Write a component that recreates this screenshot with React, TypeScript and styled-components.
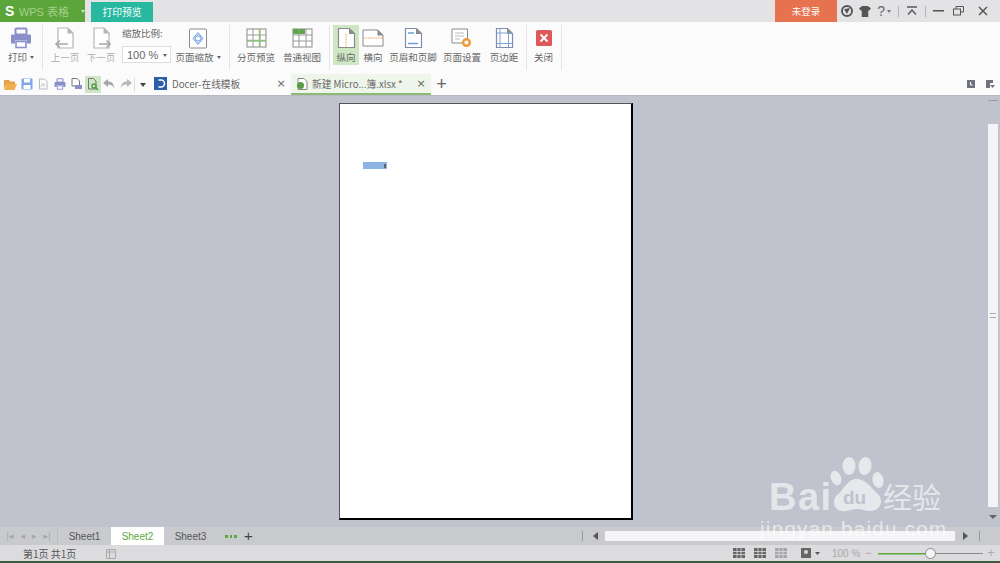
import React from "react";
import styled, { createGlobalStyle } from "styled-components";

const GlobalStyle = createGlobalStyle`
  html, body { margin: 0; padding: 0; background: #e3e3e5; overflow: hidden; }
  * { box-sizing: border-box; }
`;

const Font = `"Noto Sans CJK SC", "Liberation Sans", sans-serif`;

const Blue = "#8b8fc9";

/* ---------- icons ---------- */
const Sheet = ({ stroke = "#9a9a9a", children }: { stroke?: string; children?: React.ReactNode }) => (
  <svg width="24" height="22" viewBox="0 0 24 22" fill="none">
    <path d="M4.500 1.500h11l5 5v14h-16z" fill="#fff" stroke={stroke} strokeWidth="1.200" />
    <path d="M15 1.500v5.500h5.500z" fill="#8a8a8a" />
    {children}
  </svg>
);

const PrintIcon = ({ size = 22, color = Blue }: { size?: number; color?: string }) => (
  <svg width={size} height={size} viewBox="0 0 22 22">
    <rect x="5.500" y="1.500" width="11" height="6" fill="none" stroke={color} strokeWidth="2" rx="1" />
    <path d="M1 8.500a1 1 0 0 1 1-1h18a1 1 0 0 1 1 1v8h-4v-3H5v3H1z" fill={color} />
    <rect x="6" y="14.500" width="10" height="6" fill="#fff" stroke={color} strokeWidth="1.600" />
  </svg>
);

const PageArrow = ({ right }: { right?: boolean }) => (
  <svg width="24" height="22" viewBox="0 0 24 22" fill="none">
    <path d="M5 1h10l5 5v15H5z" fill="#fff" stroke="#b5b5b5" strokeWidth="1.200" />
    <path d="M14.500 1v5.500H20z" fill="#b5b5b5" />
    {right ? (
      <path d="M10 17h11M17.500 13.500l3.500 3.500-3.500 3.500" stroke="#a8a8a8" strokeWidth="1.600" />
    ) : (
      <path d="M15 17H3M7 13.500L3 17l4 3.500" stroke="#a8a8a8" strokeWidth="1.600" />
    )}
  </svg>
);

const FitIcon = () => (
  <svg width="20" height="21" viewBox="0 0 20 21" fill="none">
    <rect x="1.500" y="1" width="17" height="19" rx="1" fill="#fff" stroke="#8a8a8a" />
    <path d="M10 4.500l5 6-5 6-5-6z" fill="#cfe0f7" stroke="#6f9fe0" />
    <circle cx="10" cy="10.500" r="2.600" fill="#fff" stroke="#6f9fe0" />
  </svg>
);

const GridIcon = ({ corner }: { corner?: boolean }) => (
  <svg width="21" height="20" viewBox="0 0 21 20" fill="none">
    <rect x="1" y="1" width="19" height="18" fill="#fff" stroke="#8a8a8a" />
    {corner && <rect x="1" y="1" width="12" height="5" fill="#5da84a" />}
    <path d="M1 7h19M1 13h19M7 1v18M14 1v18" stroke="#9a9a9a" />
    {!corner && <path d="M1 12.500h19M13.500 1v18" stroke="#8cc377" strokeWidth="1.400" />}
  </svg>
);

const CloseSquare = () => (
  <svg width="16" height="16" viewBox="0 0 16 16">
    <rect width="16" height="16" rx="1.500" fill="#dd5a5c" />
    <path d="M4.500 4.500l7 7M11.500 4.500l-7 7" stroke="#fff" strokeWidth="2" />
  </svg>
);

const Paw = () => (
  <svg width="56" height="64" viewBox="0 0 56 64" fill="rgba(255,255,255,.62)">
    <ellipse cx="19" cy="10" rx="6.500" ry="9" />
    <ellipse cx="35" cy="10" rx="6.500" ry="9" transform="rotate(8 35 10)" />
    <ellipse cx="6" cy="22" rx="5" ry="7.500" transform="rotate(-20 6 22)" />
    <ellipse cx="48" cy="24" rx="5.500" ry="8" transform="rotate(-12 48 24)" />
    <path d="M27 23c9 0 14 9 21 15 6 6 3 17-8 17-5 0-8-2-13-2s-9 3-15 2C3 54 2 44 7 39c7-5 10-16 20-16z" />
  </svg>
);

/* ---------- layout ---------- */
const Root = styled.div`
  position: relative;
  width: 1000px;
  height: 563px;
  display: flex;
  flex-direction: column;
  overflow: hidden;
  font-family: ${Font};
  background: #e3e3e5;
`;

const TitleBar = styled.div`
  height: 22px;
  display: flex;
  align-items: stretch;
  background: #e3e3e5;
`;

const AppButton = styled.div`
  width: 85px;
  background: #5ba53a;
  display: flex;
  align-items: center;
  padding-left: 5px;
  color: #a5d08d;
  font-size: 11px;
  gap: 4px;
  white-space: nowrap;
  font-family: "Liberation Sans", "Noto Sans CJK SC", sans-serif;
`;

const AppMark = styled.span`
  color: #fff;
  font-weight: 700;
  font-size: 14px;
  width: 11px;
`;

const AppCaret = styled.span`
  margin-left: 8px;
  width: 0;
  height: 0;
  border: 2.500px solid transparent;
  border-top: 3px solid #cfe5c0;
  margin-top: 3px;
`;

const PreviewTab = styled.div`
  margin: 2px 0 0 6px;
  width: 62px;
  background: #27b89f;
  color: #fff;
  font-size: 9.800px;
  display: flex;
  align-items: center;
  justify-content: center;
`;

const Spring = styled.div`
  flex: 1;
`;

const Login = styled.div`
  width: 62px;
  background: #e6724f;
  color: #fff;
  font-size: 9.500px;
  display: flex;
  align-items: center;
  justify-content: center;
`;

const WinTools = styled.div`
  width: 163px;
  display: flex;
  align-items: center;
`;

const WinBtn = styled.div<{ $w: number; $pr?: number }>`
  width: ${(p) => p.$w}px;
  padding-right: ${(p) => p.$pr ?? 0}px;
  display: flex;
  align-items: center;
  justify-content: center;
  gap: 2px;
  color: #666;
  font-family: "Liberation Sans", sans-serif;
  font-size: 14px;
`;

const WinSep = styled.div`
  width: 1px;
  height: 11px;
  background: #b4b4b8;
`;

const Ribbon = styled.div`
  height: 51px;
  background: #fbfbfb;
  display: flex;
  align-items: flex-start;
  padding: 3px 0 0 0;
`;

const RibbonSep = styled.div<{ $gap?: number }>`
  width: 1px;
  height: 45px;
  background: #e6e6e6;
  margin-right: ${(p) => p.$gap ?? 0}px;
`;

const Tool = styled.div<{ $w: number; $after?: number; $active?: boolean; $muted?: boolean }>`
  width: ${(p) => p.$w}px;
  margin-right: ${(p) => p.$after ?? 0}px;
  height: 40px;
  display: flex;
  flex-direction: column;
  align-items: center;
  padding-top: 2px;
  flex-shrink: 0;
  background: ${(p) => (p.$active ? "#cfe6c5" : "transparent")};
  color: ${(p) => (p.$muted ? "#aeaeae" : "#666")};
  font-size: 9.500px;
  white-space: nowrap;
`;

const ToolIcon = styled.div`
  height: 22px;
  display: flex;
  align-items: center;
  justify-content: center;
`;

const ToolLabel = styled.div`
  margin-top: 2px;
  line-height: 12px;
  display: flex;
  align-items: center;
  gap: 3px;
`;

const Caret = styled.span<{ $color?: string; $big?: boolean }>`
  display: inline-block;
  width: 0;
  height: 0;
  border: ${(p) => (p.$big ? 3 : 2)}px solid transparent;
  border-top: ${(p) => (p.$big ? 4 : 3)}px solid ${(p) => p.$color ?? "#666"};
  border-bottom-width: 0;
  margin-top: 1px;
`;

const ZoomGroup = styled.div`
  width: 49px;
  margin-left: 3px;
  color: #666;
  font-size: 9.500px;
`;

const ZoomTitle = styled.div`
  line-height: 12px;
  margin-top: 2px;
  white-space: nowrap;
`;

const ZoomSelect = styled.div`
  margin-top: 7px;
  height: 17px;
  border: 1px solid #dedede;
  background: #fff;
  display: flex;
  align-items: center;
  justify-content: space-between;
  padding: 0 3px 0 4px;
  font-family: "Liberation Sans", sans-serif;
  font-size: 11px;
`;

const TabBar = styled.div`
  height: 22px;
  background: #fbfbfb;
  display: flex;
  align-items: center;
  padding-left: 2px;
`;

const Quick = styled.div<{ $on?: boolean }>`
  width: 16.500px;
  height: 17px;
  display: flex;
  align-items: center;
  justify-content: center;
  background: ${(p) => (p.$on ? "#cfe6c5" : "transparent")};
`;

const QuickSep = styled.div`
  width: 1px;
  height: 15px;
  background: #ddd;
  margin-right: 5px;
`;

const DocTab = styled.div<{ $on?: boolean; $w: number; $before?: number }>`
  width: ${(p) => p.$w}px;
  height: 21px;
  margin-left: ${(p) => p.$before ?? 0}px;
  margin-top: 1px;
  display: flex;
  align-items: center;
  padding: 0 5px;
  font-size: 9.700px;
  color: #666;
  background: ${(p) => (p.$on ? "#eef5ea" : "transparent")};
  border-bottom: 2px solid ${(p) => (p.$on ? "#8dbb74" : "transparent")};
`;

const DocName = styled.span<{ $gap: number }>`
  flex: 1;
  margin-left: ${(p) => p.$gap}px;
  white-space: nowrap;
`;

const TabClose = styled.span`
  color: #666;
  font-family: "DejaVu Sans", sans-serif;
  font-size: 11px;
  width: 10px;
  text-align: center;
`;

const PlusBtn = styled.span`
  color: #666;
  font-family: "Liberation Sans", sans-serif;
  font-size: 18px;
  line-height: 18px;
  margin-left: 5px;
  width: 11px;
  text-align: center;
`;

const TabTools = styled.div`
  margin-left: auto;
  display: flex;
  gap: 11px;
  padding-right: 5px;
`;

const Workspace = styled.div`
  flex: 1;
  min-height: 0;
  background: #c0c3cd;
  display: flex;
  border-top: 1px solid #b7bac4;
`;

const Canvas = styled.div`
  flex: 1;
  padding: 7px 0 0 339px;
`;

const Paper = styled.div`
  width: 294px;
  height: 417px;
  background: #fff;
  border: 1px solid #555;
  border-right: 2px solid #000;
  border-bottom: 2px solid #000;
  padding: 58px 0 0 23px;
`;

const Cell = styled.div`
  width: 24px;
  height: 7px;
  background: #8db4e2;
  display: flex;
  justify-content: flex-end;
  align-items: center;
  padding-right: 1px;
`;

const CellMark = styled.span`
  width: 2px;
  height: 4px;
  background: #5a6672;
`;

const VScroll = styled.div`
  width: 12px;
  display: flex;
  flex-direction: column;
  align-items: center;
  padding-right: 2px;
`;

const VCap = styled.div`
  height: 28px;
  display: flex;
  align-items: flex-start;
  justify-content: center;
  padding-top: 4px;
`;

const VThumb = styled.div`
  width: 10px;
  height: 383px;
  background: #f4f4f6;
  display: flex;
  align-items: center;
  justify-content: center;
`;

const VGrip = styled.div`
  width: 6px;
  height: 5px;
  border-top: 1px solid #aaa;
  border-bottom: 1px solid #aaa;
`;

const VDown = styled.div`
  margin-top: 8px;
  width: 0;
  height: 0;
  border: 4px solid transparent;
  border-top: 4px solid #666;
`;

const SheetBar = styled.div`
  height: 18px;
  background: #c9cacd;
  display: flex;
  align-items: stretch;
  font-size: 10px;
`;

const SheetNav = styled.div`
  width: 58px;
  display: flex;
  align-items: center;
  justify-content: space-between;
  padding: 0 6px;
  color: #a6a6a8;
  font-size: 9px;
  font-family: "DejaVu Sans", sans-serif;
  border-right: 1px solid #bdbdc0;
`;

const SheetTab = styled.div<{ $on?: boolean }>`
  width: 53px;
  display: flex;
  align-items: center;
  justify-content: center;
  background: ${(p) => (p.$on ? "#fff" : "transparent")};
  color: ${(p) => (p.$on ? "#5da83e" : "#555")};
  font-family: "Liberation Sans", sans-serif;
`;

const SheetMore = styled.div`
  margin-left: 8px;
  width: 12px;
  display: flex;
  align-items: center;
  gap: 2px;
`;

const Dot = styled.span`
  width: 3px;
  height: 3px;
  background: #5da83e;
`;

const SheetPlus = styled.span`
  margin-left: 6px;
  width: 11px;
  color: #444;
  font-family: "Liberation Sans", sans-serif;
  font-size: 15px;
  line-height: 18px;
  text-align: center;
`;

const HScroll = styled.div`
  margin-left: auto;
  width: 418px;
  display: flex;
  align-items: center;
  padding: 0 20px 0 0;
`;

const HDivider = styled.div`
  width: 1px;
  height: 10px;
  background: #9a9a9c;
`;

const VCapLine = styled.div`
  width: 10px;
  height: 1px;
  background: #9a9a9c;
`;

const Tri = styled.div<{ $right?: boolean }>`
  width: 0;
  height: 0;
  border-top: 4px solid transparent;
  border-bottom: 4px solid transparent;
  ${(p) => (p.$right ? "border-left: 5px solid #555;" : "border-right: 5px solid #555;")}
  margin: ${(p) => (p.$right ? "0 11px 0 8px" : "0 7px 0 10px")};
`;

const HThumb = styled.div`
  flex: 1;
  height: 10px;
  background: #f4f4f6;
`;

const StatusBar = styled.div`
  height: 16px;
  background: #dcdcde;
  display: flex;
  align-items: center;
  padding: 0 4px 0 23px;
  font-size: 10px;
  color: #555;
`;

const StatusIcon = styled.div`
  margin-left: 29px;
  display: flex;
`;

const ViewBtns = styled.div`
  margin-left: auto;
  display: flex;
  align-items: center;
  gap: 9px;
  margin-right: 7px;
`;

const ViewLast = styled.div`
  margin-left: 5px;
  display: flex;
`;

const ZoomText = styled.span`
  color: #a8a8aa;
  font-family: "Liberation Sans", sans-serif;
  font-size: 10px;
  width: 31px;
`;

const SliderSign = styled.span<{ $before?: number }>`
  margin-left: ${(p) => p.$before ?? 0}px;
  color: #a8a8aa;
  font-family: "Liberation Sans", sans-serif;
  font-size: 12px;
  width: 10px;
  text-align: center;
`;

const Slider = styled.div`
  position: relative;
  margin-left: 5px;
  width: 105px;
  height: 1px;
  background: #8a8a8a;
`;

const SliderFill = styled.div`
  height: 1px;
  background: #5da83e;
  box-shadow: 0 0.500px 0 #5da83e;
  width: 48px;
`;

const Knob = styled.div`
  position: absolute;
  left: 47px;
  top: -5px;
  width: 11px;
  height: 11px;
  border-radius: 50%;
  background: #f5f5f5;
  border: 1px solid #8a8a8a;
`;

const BottomEdge = styled.div`
  height: 2px;
  background: #3e5b3c;
`;

/* watermark lies over the app */
const Watermark = styled.div`
  position: absolute;
  left: 760px;
  top: 456px;
  width: 200px;
  color: rgba(255, 255, 255, 0.62);
  pointer-events: none;
`;

const MarkRow = styled.div`
  display: flex;
  align-items: flex-start;
  padding-left: 9px;
  height: 62px;
`;

const BaiText = styled.span`
  width: 61px;
  margin-top: 20px;
  font-family: "Liberation Sans", sans-serif;
  font-weight: 700;
  font-size: 38px;
  line-height: 42px;
  letter-spacing: 1.500px;
`;

const PawSlot = styled.span`
  position: relative;
  display: flex;
`;

const DuText = styled.span`
  position: absolute;
  left: 13px;
  top: 33px;
  font-family: "Liberation Sans", sans-serif;
  font-weight: 700;
  font-size: 19px;
  line-height: 18px;
  color: #c0c3cd;
`;

const JingYan = styled.span`
  font-size: 29px;
  line-height: 30px;
  margin-left: -3px;
  margin-top: 25px;
  white-space: nowrap;
`;

const SiteText = styled.div`
  margin-top: 0;
  font-family: "Liberation Sans", sans-serif;
  font-size: 20.500px;
  letter-spacing: 1.300px;
  line-height: 22px;
  white-space: nowrap;
`;

/* ---------- small bits ---------- */
const smallIcons = [
  <svg width="13" height="11" viewBox="0 0 13 11"><path d="M0 1h5l1 1.500h5V5H3L0 10z" fill="#e6a04a" /><path d="M3 5h10l-2.500 6H0z" fill="#f0b050" /></svg>,
  <svg width="12" height="12" viewBox="0 0 12 12"><rect x=".5" y=".5" width="11" height="11" rx="1" fill="#7fa8e8" /><rect x="3" y="1" width="6" height="3.500" fill="#fff" /><rect x="2.500" y="7" width="7" height="4" fill="#fff" /></svg>,
  <svg width="12" height="12" viewBox="0 0 12 12" fill="none"><path d="M2.500 1h5l2.500 2.500V11h-7.500z" stroke="#bbb" /><path d="M4 8.500l2-3 2 3" stroke="#bbb" /></svg>,
  <PrintIcon size={12} />,
  <svg width="13" height="12" viewBox="0 0 13 12" fill="none"><path d="M2 .5h5L9.500 3v5h-7.500z" stroke="#777" fill="#fff" /><rect x="5" y="7" width="7" height="4" fill={Blue} /></svg>,
  <svg width="12" height="13" viewBox="0 0 12 13" fill="none"><path d="M1.500.500h5l2.500 2.500v8h-7.500z" stroke="#777" /><circle cx="7" cy="8" r="2" stroke="#4d9a3a" strokeWidth="1.300" /><path d="M8.500 9.500l2.500 2.500" stroke="#4d9a3a" strokeWidth="1.500" /></svg>,
  <svg width="12" height="10" viewBox="0 0 12 10"><path d="M5 0L0 4l5 4V5.500c3 0 5 1 6 3.500 0-4-2-6.500-6-6.500z" fill="#a5a5a5" /></svg>,
  <svg width="12" height="10" viewBox="0 0 12 10"><path d="M7 0l5 4-5 4V5.500c-3 0-5 1-6 3.500 0-4 2-6.500 6-6.500z" fill="#b8b8b8" /></svg>,
];

const GridMini = ({ color = "#666" }: { color?: string }) => (
  <svg width="12" height="10" viewBox="0 0 12 10">
    <rect width="12" height="10" fill={color} />
    <path d="M0 3.500h12M0 6.500h12M4 0v10M8 0v10" stroke="#dcdcde" strokeWidth=".8" />
  </svg>
);

export default function App() {
  return (
    <Root>
      <GlobalStyle />
      <TitleBar>
        <AppButton>
          <AppMark>S</AppMark>
          <span>WPS 表格</span>
          <AppCaret />
        </AppButton>
        <PreviewTab>打印预览</PreviewTab>
        <Spring />
        <Login>未登录</Login>
        <WinTools>
          <WinBtn $w={20}>
            <svg width="12" height="12" viewBox="0 0 10 10"><circle cx="5" cy="5" r="4.200" fill="none" stroke="#555" strokeWidth="1.600" /><path d="M2.500 3.500L7.500 2.500 5 7.500z" fill="#555" /></svg>
          </WinBtn>
          <WinBtn $w={18}>
            <svg width="12" height="11" viewBox="0 0 11 10"><path d="M3 0h5l3 2-1.500 2H8.500v6h-6V4H1.500L0 2z" fill="#555" /></svg>
          </WinBtn>
          <WinBtn $w={24} $pr={4}>?<Caret $color="#777" /></WinBtn>
          <WinSep />
          <WinBtn $w={27}>
            <svg width="12" height="10" viewBox="0 0 12 10" fill="none" stroke="#555" strokeWidth="1.300"><path d="M1 1h10M2 8.500l4-4.500 4 4.500" /></svg>
          </WinBtn>
          <WinSep />
          <WinBtn $w={25}>
            <svg width="11" height="2" viewBox="0 0 11 2"><rect width="11" height="1.500" fill="#555" /></svg>
          </WinBtn>
          <WinBtn $w={16}>
            <svg width="11" height="10" viewBox="0 0 11 10" fill="none" stroke="#555"><rect x=".5" y="3" width="7" height="6" /><path d="M3 3V.5h7.500V6H8" /></svg>
          </WinBtn>
          <WinBtn $w={34}>
            <svg width="10" height="10" viewBox="0 0 10 10" stroke="#555" strokeWidth="1.500"><path d="M1 1l8 8M9 1l-8 8" /></svg>
          </WinBtn>
        </WinTools>
      </TitleBar>

      <Ribbon>
        <Tool $w={42}>
          <ToolIcon><PrintIcon /></ToolIcon>
          <ToolLabel>打印<Caret /></ToolLabel>
        </Tool>
        <RibbonSep $gap={4} />
        <Tool $w={36} $muted>
          <ToolIcon><PageArrow /></ToolIcon>
          <ToolLabel>上一页</ToolLabel>
        </Tool>
        <Tool $w={36} $muted>
          <ToolIcon><PageArrow right /></ToolIcon>
          <ToolLabel>下一页</ToolLabel>
        </Tool>
        <ZoomGroup>
          <ZoomTitle>缩放比例:</ZoomTitle>
          <ZoomSelect>100 %<Caret /></ZoomSelect>
        </ZoomGroup>
        <Tool $w={54} $after={4}>
          <ToolIcon><FitIcon /></ToolIcon>
          <ToolLabel>页面缩放<Caret /></ToolLabel>
        </Tool>
        <RibbonSep />
        <Tool $w={52}>
          <ToolIcon><GridIcon /></ToolIcon>
          <ToolLabel>分页预览</ToolLabel>
        </Tool>
        <Tool $w={40} $after={7}>
          <ToolIcon><GridIcon corner /></ToolIcon>
          <ToolLabel>普通视图</ToolLabel>
        </Tool>
        <RibbonSep $gap={3} />
        <Tool $w={26} $active>
          <ToolIcon>
            <Sheet stroke="#8a8a8a"><path d="M12 7v13" stroke="#e6a04a" strokeDasharray="1.500 1" /></Sheet>
          </ToolIcon>
          <ToolLabel>纵向</ToolLabel>
        </Tool>
        <Tool $w={28}>
          <ToolIcon>
            <svg width="22" height="18" viewBox="0 0 22 18" fill="none">
              <path d="M1 1h15l5 5v11H1z" fill="#fff" stroke="#8a8a8a" />
              <path d="M15.500 1v5.500H21z" fill="#8a8a8a" />
              <path d="M1 9h20" stroke="#e6a04a" strokeDasharray="1.500 1" />
            </svg>
          </ToolIcon>
          <ToolLabel>横向</ToolLabel>
        </Tool>
        <Tool $w={52}>
          <ToolIcon>
            <Sheet stroke="#7d8ea8">
              <path d="M7 6h6M7 16.500h10" stroke="#6f9fe0" strokeWidth="1.600" />
            </Sheet>
          </ToolIcon>
          <ToolLabel>页眉和页脚</ToolLabel>
        </Tool>
        <Tool $w={46}>
          <ToolIcon>
            <svg width="24" height="22" viewBox="0 0 24 22" fill="none">
              <path d="M2 2h15.500v14H2z" fill="#fff" stroke="#8a8a8a" />
              <path d="M5 6h9M5 9h9M5 12h5" stroke="#bbb" />
              <circle cx="16.500" cy="15.500" r="3.300" stroke="#ee9a35" strokeWidth="2.400" fill="#fff" />
            </svg>
          </ToolIcon>
          <ToolLabel>页面设置</ToolLabel>
        </Tool>
        <Tool $w={38} $after={3}>
          <ToolIcon>
            <Sheet stroke="#7d8ea8">
              <path d="M8 2v18M16.500 7v13M5 6h15M5 16.500h15" stroke="#7fa0d8" />
            </Sheet>
          </ToolIcon>
          <ToolLabel>页边距</ToolLabel>
        </Tool>
        <RibbonSep />
        <Tool $w={33} $after={1}>
          <ToolIcon><CloseSquare /></ToolIcon>
          <ToolLabel>关闭</ToolLabel>
        </Tool>
        <RibbonSep />
      </Ribbon>

      <TabBar>
        {smallIcons.map((icon, i) => (
          <Quick key={i} $on={i === 5}>{icon}</Quick>
        ))}
        <QuickSep />
        <Caret $color="#444" $big />
        <DocTab $w={142} $before={3}>
          <svg width="13" height="13" viewBox="0 0 13 13">
            <rect width="13" height="13" fill="#2c5fa8" />
            <path d="M4.500 3h2.500a3.500 3.500 0 0 1 0 7H4.500" fill="none" stroke="#fff" strokeWidth="1.500" />
          </svg>
          <DocName $gap={5}>Docer-在线模板</DocName>
          <TabClose>×</TabClose>
        </DocTab>
        <DocTab $w={140} $on>
          <svg width="12" height="12" viewBox="0 0 12 12">
            <path d="M2 .5h6L11 3.500V11.500H2z" fill="#fff" stroke="#888" />
            <circle cx="4.500" cy="7.500" r="3.500" fill="#5c9a48" />
          </svg>
          <DocName $gap={4}>新建 Micro...簿.xlsx *</DocName>
          <TabClose>×</TabClose>
        </DocTab>
        <PlusBtn>+</PlusBtn>
        <TabTools>
          <svg width="8" height="8" viewBox="0 0 8 8"><rect width="8" height="8" fill="#70737f" /><path d="M3.500 2v3h2" stroke="#fff" fill="none" /></svg>
          <svg width="9" height="8" viewBox="0 0 9 8"><path d="M0 0h7v3H4v5H0z" fill="#70737f" /><path d="M4 5h5L6.500 8z" fill="#70737f" /></svg>
        </TabTools>
      </TabBar>

      <Workspace>
        <Canvas>
          <Paper>
            <Cell><CellMark /></Cell>
          </Paper>
        </Canvas>
        <VScroll>
          <VCap><VCapLine /></VCap>
          <VThumb><VGrip /></VThumb>
          <VDown />
        </VScroll>
      </Workspace>

      <SheetBar>
        <SheetNav>
          <span>|◂</span><span>◂</span><span>▸</span><span>▸|</span>
        </SheetNav>
        <SheetTab>Sheet1</SheetTab>
        <SheetTab $on>Sheet2</SheetTab>
        <SheetTab>Sheet3</SheetTab>
        <SheetMore><Dot /><Dot /><Dot /></SheetMore>
        <SheetPlus>+</SheetPlus>
        <HScroll>
          <HDivider />
          <Tri />
          <HThumb />
          <Tri $right />
          <HDivider />
        </HScroll>
      </SheetBar>

      <StatusBar>
        <span>第1页 共1页</span>
        <StatusIcon>
          <svg width="11" height="11" viewBox="0 0 11 11" fill="none" stroke="#aaa"><path d="M1.500 1.500h9v9h-9zM4.500 1.500v9M1.500 4h9" /></svg>
        </StatusIcon>
        <ViewBtns>
          <GridMini />
          <GridMini />
          <GridMini color="#a6a6a8" />
          <ViewLast>
            <svg width="24" height="10" viewBox="0 0 24 10">
              <rect x="0" width="10" height="10" fill="#666" />
              <circle cx="5" cy="4" r="2" fill="#dcdcde" />
              <path d="M14 4h5l-2.500 3z" fill="#555" />
            </svg>
          </ViewLast>
        </ViewBtns>
        <ZoomText>100 %</ZoomText>
        <SliderSign>−</SliderSign>
        <Slider>
          <SliderFill />
          <Knob />
        </Slider>
        <SliderSign $before={3}>+</SliderSign>
      </StatusBar>
      <BottomEdge />

      <Watermark>
        <MarkRow>
          <BaiText>Bai</BaiText>
          <PawSlot>
            <Paw />
            <DuText>du</DuText>
          </PawSlot>
          <JingYan>经验</JingYan>
        </MarkRow>
        <SiteText>jingyan.baidu.com</SiteText>
      </Watermark>
    </Root>
  );
}
